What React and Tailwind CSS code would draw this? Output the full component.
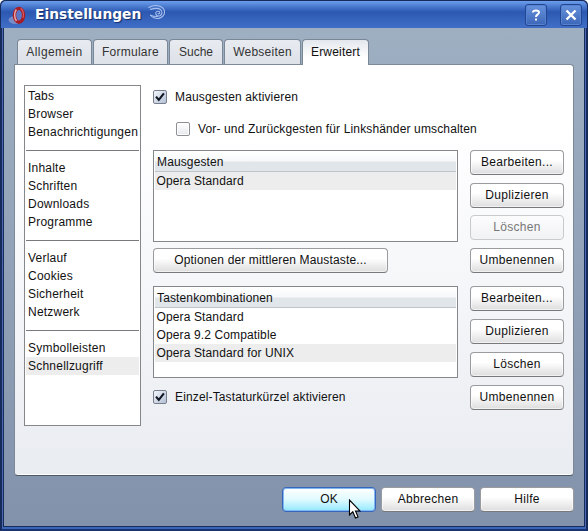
import clsx from 'clsx'

const tabs = [
  { label: 'Allgemein', className: 'w-[75px] tracking-[0.4px]' },
  { label: 'Formulare', className: 'w-[75px] tracking-[0.25px]' },
  { label: 'Suche', className: 'w-[54px] tracking-[0px]' },
  { label: 'Webseiten', className: 'w-[77px] tracking-[0.25px]' },
  { label: 'Erweitert', className: 'w-[67px] tracking-[0.2px]', active: true },
]

const groups = [
  ['Tabs', 'Browser', 'Benachrichtigungen'],
  ['Inhalte', 'Schriften', 'Downloads', 'Programme'],
  ['Verlauf', 'Cookies', 'Sicherheit', 'Netzwerk'],
  ['Symbolleisten', 'Schnellzugriff'],
]

function OperaLogo() {
  return (
    <svg className="mt-px ml-[4px] shrink-0" width="19" height="19" viewBox="0 0 19 19">
      <ellipse cx="7.5" cy="14" rx="7" ry="4" fill="#a4a9cf" opacity="0.6" />
      <ellipse cx="11" cy="9.3" rx="4.6" ry="6.9" fill="#5a78c8" stroke="#a51c25" strokeWidth="3.4" />
      <path d="M8.3 3.5C6 7 6.2 12 8.5 15" fill="none" stroke="#e8a7ad" strokeWidth="1.5" />
      <path d="M12.5 2.3C15.3 4 15.8 8 15 12" fill="none" stroke="#da5f66" strokeWidth="1.1" />
    </svg>
  )
}

function Swirl() {
  return (
    <svg className="-mt-[4px] ml-[7px] shrink-0" width="18" height="17" viewBox="0 0 18 17" fill="none" stroke="#a9c0ee" strokeWidth="1.1" strokeLinecap="round">
      <path d="M.8 3.4C4 1.6 9 1.2 12.5 2.5C16.2 4 17.3 7.5 16 10.5C14.4 14.3 9.5 15.3 6 13.8C4.3 13.1 3.4 12.3 2.6 11.2" />
      <path d="M2.5 5.4C6 4.4 9.5 3.8 12 5.2C14.8 6.8 14.5 10.6 12 11.7C9.6 12.7 7.3 11 7.8 8.9C8.2 7 11 6.7 11.7 8.3C12.1 9.4 11 10.2 10.1 9.6" />
      <path d="M2.6 11.2C5 12.2 7 12.6 9.5 12.4" />
    </svg>
  )
}

function TitleButton({ children, className }) {
  return (
    <button className={clsx('flex h-[22px] w-[22px] items-center justify-center rounded-[3px] border border-[#234690] bg-linear-to-b from-[#6792dd] to-[#3c67b8] shadow-[inset_0_0_0_1px_#5582d1]', className)}>
      {children}
    </button>
  )
}

function Button({ children, className, disabled, primary }) {
  return (
    <button
      disabled={disabled}
      className={clsx(
        'flex h-[25px] w-[94px] shrink-0 items-center justify-center rounded-[4px] border pb-px whitespace-nowrap',
        primary && 'border-[#3665bd] bg-linear-to-b from-white via-[#e0faff] to-[#8fe8ff] shadow-[inset_0_0_0_1px_#83b5ee]',
        disabled && 'border-[#c8cacc] bg-linear-to-b from-[#fcfcfd] to-[#f1f2f3] text-[#777]',
        !primary && !disabled && 'border-[#999b9f] border-b-[#77797c] bg-linear-to-b from-white from-40% to-[#dddddd] shadow-[inset_0_0_0_1px_#ffffff90]',
        className,
      )}
    >
      {children}
    </button>
  )
}

function Checkbox({ checked, label, className }) {
  return (
    <label className={clsx('flex h-[14px] items-center tracking-[0.14px]', className)}>
      <span className={clsx('h-[14px] w-[14px] shrink-0 rounded-[2px] border', checked ? 'border-[#777f8d] bg-linear-to-br from-[#f4f7fc] to-[#b3bfd3]' : 'border-[#8c8f94] bg-linear-to-b from-white to-[#e7e9ec] shadow-[inset_0_0_0_1px_white]')}>
        {checked && (
          <svg width="12" height="12" viewBox="0 0 12 12" fill="none" stroke="#111722" strokeWidth="2.1">
            <path d="M2 5.6L4.8 8.9L9.9 2.3" />
          </svg>
        )}
      </span>
      <span className="ml-2 whitespace-nowrap">{label}</span>
    </label>
  )
}

function ListBox({ title, items, selected }) {
  return (
    <div className="h-[92px] w-[305px] border border-[#85878b] bg-white p-px tracking-[0.13px]">
      <div className="h-5 border-b border-[#bec4cc] bg-linear-to-b from-white from-0% via-[#f6f8fa] via-45% to-[#e1e6eb] to-55% pl-[2px] leading-[21px]">
        {title}
      </div>
      {items.map((item) => (
        <div key={item} className={clsx('h-[18px] pl-[1.5px] leading-[18px]', item === selected && 'bg-[#ededed]')}>
          {item}
        </div>
      ))}
    </div>
  )
}

export default function App() {
  return (
    <div className="relative flex h-[531px] w-[588px] flex-col overflow-hidden rounded-t-[5px] bg-[#172a5c] font-['Liberation_Sans',Arial,sans-serif] text-[12px] leading-[18px] tracking-[0.22px] text-[#111]">
      <header className="mx-px mt-px flex h-[27px] shrink-0 items-center rounded-t-[5px] bg-linear-to-b from-[#6c9eed] from-0% via-[#2c58b2] via-40% to-[#416fc6] pl-[3px]">
        <OperaLogo />
        <h1 className="-mt-[2px] ml-[8px] font-['DejaVu_Sans',sans-serif] text-[13.8px] font-bold tracking-normal text-white [text-shadow:1px_1px_1px_#122e68]">
          Einstellungen
        </h1>
        <Swirl />
        <TitleButton className="ml-auto">
          <svg width="10" height="12" viewBox="0 0 10 12" fill="none" stroke="white" strokeWidth="2">
            <path d="M2 3.5C2 .8 8 .8 8 3.6C8 5.5 5 5.3 5 8M5 9.5V11.5" />
          </svg>
        </TitleButton>
        <TitleButton className="mr-[5px] ml-[13px]">
          <svg width="12" height="12" viewBox="0 0 12 12" fill="none" stroke="white" strokeWidth="2.4">
            <path d="M1.5 1.5L10.5 10.5M10.5 1.5L1.5 10.5" />
          </svg>
        </TitleButton>
      </header>

      <div className="flex min-h-0 flex-1 border-x-2 border-b-2 border-[#172a5c] border-b-[#1b3270]">
        <div className="flex flex-1 flex-col border-x border-b-2 border-x-[#4a6ab0] border-b-[#3a66b9]">
          <div className="flex flex-1 flex-col border-x border-b border-[#182c5c] bg-linear-to-b from-[#9fafc2] to-[#8292ab] px-[10px] pt-[11px]">
            <nav className="z-10 ml-[3px] flex h-[26px] gap-px">
              {tabs.map((tab) => (
                <div
                  key={tab.label}
                  className={clsx(
                    'rounded-t-[4px] border border-b-0 border-[#7a8797] text-center leading-[25px]',
                    tab.className,
                    tab.active ? 'h-[26px] bg-linear-to-b from-[#e3e7ed] to-white to-70%' : 'h-[25px] bg-linear-to-b from-[#e8ebf0] to-[#dde1e8] text-[#333]',
                  )}
                >
                  {tab.label}
                </div>
              ))}
            </nav>

            <main className="-mt-px flex h-[412px] rounded-[4px] rounded-tl-none border border-[#7d8998] border-b-[#4e5968] bg-linear-to-b from-white from-15% to-[#e9ecf1] pt-5 pl-[9px] shadow-[inset_0_-1px_0_#fff]">
              <aside className="h-[341px] w-[117px] border border-[#85878b] bg-white p-px">
                {groups.map((group, i) => (
                  <div key={group[0]}>
                    {i > 0 && (
                      <div className="flex h-[18px] items-center">
                        <div className="h-px w-full bg-[#77797c]" />
                      </div>
                    )}
                    {group.map((name) => (
                      <div key={name} className={clsx('h-[18px] pl-[2px] whitespace-nowrap', name === 'Schnellzugriff' && 'bg-[#ededed]')}>
                        {name}
                      </div>
                    ))}
                  </div>
                ))}
              </aside>

              <section className="ml-3 w-[305px] pt-[5px]">
                <Checkbox checked label="Mausgesten aktivieren" />
                <Checkbox label="Vor- und Zurückgesten für Linkshänder umschalten" className="mt-[18px] mb-[14px] ml-[23px]" />
                <ListBox title="Mausgesten" selected="Opera Standard" items={['Opera Standard']} />
                <Button className="mt-[6px] mb-[13px] w-[235px] tracking-[0.14px]">Optionen der mittleren Maustaste...</Button>
                <ListBox
                  title="Tastenkombinationen"
                  selected="Opera Standard for UNIX"
                  items={['Opera Standard', 'Opera 9.2 Compatible', 'Opera Standard for UNIX']}
                />
                <Checkbox checked label="Einzel-Tastaturkürzel aktivieren" className="mt-3" />
              </section>

              <section className="ml-3 flex flex-col gap-[8px] pt-[65px] tracking-[0.3px]">
                <Button>Bearbeiten...</Button>
                <Button>Duplizieren</Button>
                <Button disabled className="-mt-px">Löschen</Button>
                <Button>Umbenennen</Button>
                <Button className="mt-[5px]">Bearbeiten...</Button>
                <Button>Duplizieren</Button>
                <Button>Löschen</Button>
                <Button>Umbenennen</Button>
              </section>
            </main>

            <footer className="mt-[11px] flex justify-end gap-[5px] tracking-[0.3px]">
              <Button primary className="tracking-normal">OK</Button>
              <Button className="border-[#626c7c]">Abbrechen</Button>
              <Button className="border-[#626c7c]">Hilfe</Button>
            </footer>
          </div>
        </div>
      </div>

      <svg className="absolute top-[499px] left-[348px]" width="13" height="21" viewBox="0 0 13 21">
        <path d="M1.5 1V16L4.8 12.8L7.5 19L10 17.9L7.5 12H12Z" fill="white" stroke="black" strokeWidth="1.1" />
      </svg>
    </div>
  )
}
